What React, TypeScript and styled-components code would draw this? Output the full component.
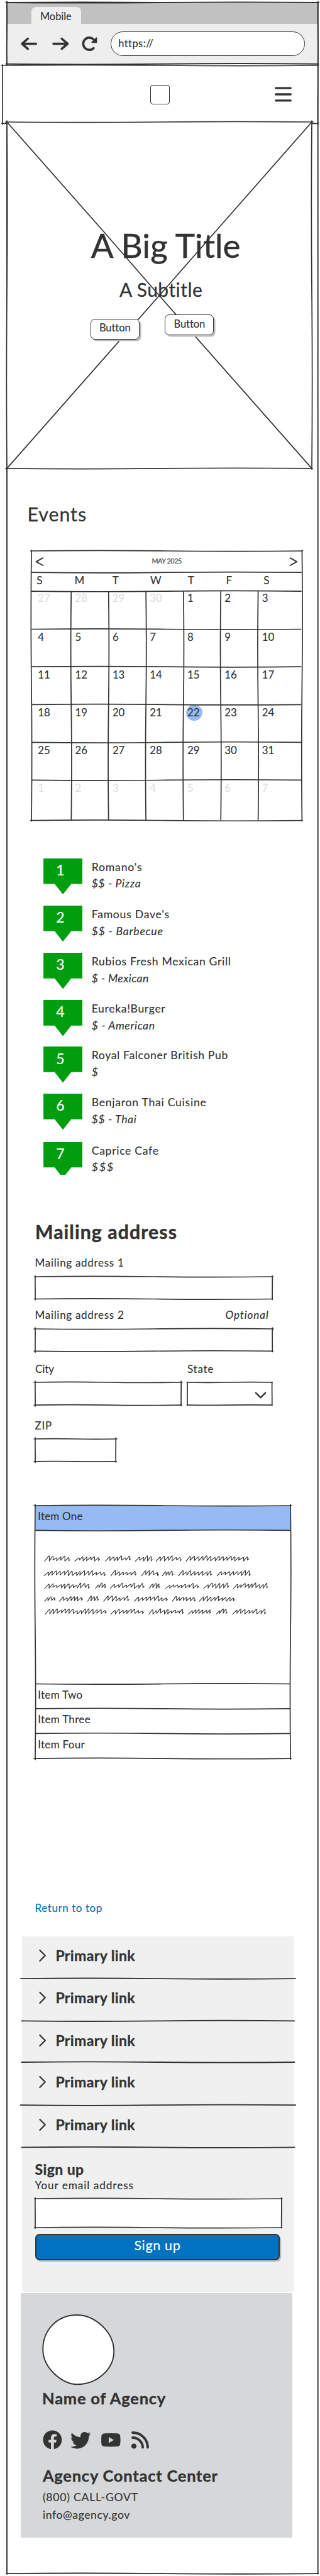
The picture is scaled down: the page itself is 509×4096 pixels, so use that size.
import React from 'react';
import styled, { createGlobalStyle, css } from 'styled-components';
import { FaFacebook, FaTwitter } from 'react-icons/fa';

const INK = '#333333';

const GlobalStyle = createGlobalStyle`
  html, body { margin: 0; padding: 0; background: #fff; }
  body { font-family: Lato, "Open Sans", sans-serif; color: ${INK}; }
  *, *::before, *::after { box-sizing: border-box; }
`;

/* ---------- hand-drawn outlines ---------- */

type Pt = [number, number, number, number];

const wobble = ([x1, y1, x2, y2]: Pt, seed: number) => {
  const dx = x2 - x1;
  const dy = y2 - y1;
  const len = Math.hypot(dx, dy) || 1;
  const amp = Math.min(1.1, len / 260) * (seed % 2 ? 1 : -1);
  const nx = (-dy / len) * amp;
  const ny = (dx / len) * amp;
  const at = (t: number, k: number) => `${(x1 + dx * t + nx * k).toFixed(2)} ${(y1 + dy * t + ny * k).toFixed(2)}`;
  return `M${at(0, 0)}C${at(0.2, 1)} ${at(0.35, 0.7)} ${at(0.5, 0)}S${at(0.8, -0.9)} ${at(1, 0)}`;
};

const Drawing = styled.svg`
  position: absolute;
  left: 0;
  top: 0;
  overflow: visible;
  pointer-events: none;
  fill: none;
  stroke: ${INK};
  stroke-linecap: round;
  stroke-linejoin: round;
`;

interface SketchProps {
  w: number;
  h: number;
  over?: number;
  stroke?: number;
  seed?: number;
  lines?: Pt[];
}

const Sketch = ({ w, h, over = 1.2, stroke = 1.7, seed = 0, lines = [] }: SketchProps) => {
  const sides: Pt[] = [
    [-over, 0, w + over, 0],
    [w, -over, w, h + over * 0.6],
    [-over, h, w + over * 0.6, h],
    [0, -over, 0, h + over],
  ];
  return (
    <Drawing width={w} height={h} strokeWidth={stroke} aria-hidden>
      {[...sides, ...lines].map((s, i) => (
        <path key={i} d={wobble(s, i + seed + (i % 3))} />
      ))}
    </Drawing>
  );
};

/* ---------- text ---------- */

interface TextProps {
  $size: number;
  $ls?: number;
  $bold?: boolean;
  $italic?: boolean;
  $color?: string;
  $top?: number;
  $left?: number;
  $right?: number;
}

const Text = styled.div<TextProps>`
  font-size: ${(p) => p.$size}px;
  line-height: ${(p) => p.$size * 1.2}px;
  height: ${(p) => p.$size * 1.2}px;
  letter-spacing: ${(p) => p.$ls ?? 0}px;
  font-weight: ${(p) => (p.$bold ? 700 : 400)};
  font-style: ${(p) => (p.$italic ? 'italic' : 'normal')};
  color: ${(p) => p.$color ?? INK};
  -webkit-text-stroke: ${(p) => (p.$bold ? 0.016 : 0.009)}em ${(p) => p.$color ?? INK};
  margin: ${(p) => p.$top ?? 0}px ${(p) => p.$right ?? 0}px 0 ${(p) => p.$left ?? 0}px;
  white-space: nowrap;
`;

const Heading = styled(Text).attrs({ as: 'h2' })``;

const Title = styled(Text).attrs({ as: 'h1' })``;

/* ---------- page ---------- */

const Page = styled.div`
  position: relative;
  width: 509px;
  height: 4096px;
  padding-top: 3.8px;
  background: #fff;
  overflow: hidden;
  display: flex;
  flex-direction: column;
  align-items: flex-start;
`;

const PageEdge = styled.div`
  position: absolute;
  left: 10.7px;
  top: 3.8px;
`;

/* ---------- browser chrome ---------- */

const Chrome = styled.div`
  position: relative;
  width: 494.7px;
  height: 97.7px;
  margin-left: 10.7px;
  flex: none;
`;

const TabStrip = styled.div`
  display: flex;
  align-items: flex-end;
  height: 33.9px;
  padding-left: 39.6px;
  background: #c1c1c1;
`;

const Tab = styled.div`
  width: 78.6px;
  height: 27.1px;
  padding: 5.9px 0 0 13.6px;
  border-radius: 7px 7px 0 0;
  background: #eee;
`;

const Toolbar = styled.div`
  display: flex;
  align-items: center;
  height: 63.8px;
  padding-left: 22.4px;
  background: #eee;
`;

const ToolIcon = styled.svg<{ $gap: number }>`
  display: block;
  flex: none;
  overflow: visible;
  fill: none;
  stroke: ${INK};
  stroke-width: 3.6;
  stroke-linecap: round;
  stroke-linejoin: round;
  margin-right: ${(p) => p.$gap}px;
`;

const AddressBar = styled.div`
  width: 309.6px;
  height: 39.6px;
  padding: 8px 0 0 11.4px;
  border: 1.9px solid ${INK};
  border-radius: 20px;
  background: #fff;
`;

/* ---------- site header ---------- */

const SiteHeader = styled.header`
  position: relative;
  display: flex;
  align-items: center;
  width: 501.5px;
  height: 92.4px;
  margin: 2.5px 0 0 3.9px;
  padding-left: 235px;
  flex: none;
  background: #fff;
`;

const LogoBox = styled.div`
  width: 31.6px;
  height: 31.2px;
  border: 1.2px solid ${INK};
  border-radius: 4px;
`;

const MenuIcon = styled.svg`
  margin-left: 167px;
  stroke: ${INK};
  stroke-width: 3.3;
  stroke-linecap: round;
  overflow: visible;
`;

/* ---------- hero ---------- */

const Hero = styled.section`
  position: relative;
  width: 485px;
  height: 550.9px;
  margin: -2.1px 0 0 10.7px;
  padding-top: 163.9px;
  flex: none;
  background: #fff;
`;

const HeroButtons = styled.div`
  position: relative;
  display: flex;
  gap: 40.6px;
  margin: 22.2px 0 0 133.1px;
`;

const HeroButton = styled.button<{ $drop?: number }>`
  width: 78px;
  height: 33.2px;
  margin: ${(p) => p.$drop ?? 0}px 0 0;
  padding: 4.6px 0 0;
  display: flex;
  justify-content: center;
  align-items: flex-start;
  font-family: inherit;
  border: 1.7px solid ${INK};
  border-radius: 7px;
  background: #fff;
  box-shadow: 2.6px 2.6px 0 #bfbfbf;
`;

/* ---------- calendar ---------- */

const COLS = [63.3, 59.4, 59.4, 59.7, 59.4, 59.4, 69.8];
const ROWS = [60.4, 59.7, 60.1, 60.1, 60, 64.1];

const Calendar = styled.section`
  position: relative;
  width: 430.4px;
  height: 428.6px;
  margin: 40px 0 0 50px;
  flex: none;
`;

const MonthBar = styled.div`
  display: flex;
  align-items: center;
  justify-content: space-between;
  height: 34.2px;
  padding: 0 7.4px;
`;

const MonthArrow = styled.svg`
  width: 11.6px;
  height: 12.2px;
  overflow: visible;
  fill: none;
  stroke: ${INK};
  stroke-width: 1.9;
  stroke-linecap: round;
  stroke-linejoin: round;
`;

const WeekRow = styled.div`
  display: grid;
  grid-template-columns: ${COLS.map((c) => `${c}px`).join(' ')};
  height: 29.9px;
  padding-top: 2.8px;
`;

const DayGrid = styled.div`
  display: grid;
  grid-template-columns: ${COLS.map((c) => `${c}px`).join(' ')};
  grid-template-rows: ${ROWS.map((r) => `${r}px`).join(' ')};
`;

const Day = styled.div<{ $first: boolean; $topRow: boolean; $today: boolean }>`
  position: relative;
  padding-top: ${(p) => (p.$topRow ? 0.7 : 2.6)}px;
  padding-left: ${(p) => (p.$first ? 10.2 : 6.2)}px;
  ${(p) =>
    p.$today &&
    css`
      &::before {
        content: '';
        position: absolute;
        left: 4.6px;
        top: 0.8px;
        width: 25.6px;
        height: 25.2px;
        border-radius: 46% 54% 50% 50% / 52% 44% 56% 48%;
        background: #95bbf2;
      }
    `}
  & > div { position: relative; }
`;

/* ---------- places ---------- */

const Places = styled.ol`
  list-style: none;
  margin: 60.2px 0 0 69.1px;
  padding: 0;
  flex: none;
`;

const Place = styled.li<{ $h: number }>`
  display: flex;
  height: ${(p) => p.$h}px;
  overflow: hidden;
`;

const Marker = styled.div`
  width: 62px;
  height: 57.5px;
  flex: none;
  padding: 5.5px 0 0 20.2px;
  background: #009e0f;
  clip-path: polygon(0 0, 62px 0, 62px 40.8px, 44.3px 40.8px, 31px 57.5px, 17.8px 40.8px, 0 40.8px);
`;

const PlaceText = styled.div`
  padding: 3px 0 0 14.6px;
`;

/* ---------- form ---------- */

const Form = styled.form`
  width: 377.2px;
  margin: 72.5px 0 0 55.5px;
  flex: none;
`;

const LabelRow = styled.div<{ $top: number }>`
  display: flex;
  justify-content: space-between;
  margin-top: ${(p) => p.$top}px;
`;

const Field = styled.div<{ $w: number; $h: number; $top: number }>`
  position: relative;
  width: ${(p) => p.$w}px;
  height: ${(p) => p.$h}px;
  margin-top: ${(p) => p.$top}px;
  background: #fff;
`;

const Pair = styled.div`
  display: flex;
  gap: 10.4px;
  margin-top: 18.7px;
`;

const SelectArrow = styled.svg`
  position: absolute;
  right: 9.8px;
  top: 16px;
  overflow: visible;
  fill: none;
  stroke: ${INK};
  stroke-width: 2.3;
  stroke-linecap: round;
  stroke-linejoin: round;
`;

/* ---------- accordion ---------- */

const Accordion = styled.section`
  position: relative;
  width: 406.1px;
  height: 402.1px;
  margin: 69.8px 0 0 55.5px;
  flex: none;
`;

const AccordionHead = styled.div<{ $h: number; $open?: boolean }>`
  height: ${(p) => p.$h}px;
  padding: 7.8px 0 0 4.7px;
  background: ${(p) => (p.$open ? '#95bbf2' : 'transparent')};
`;

const AccordionBody = styled.div`
  position: relative;
  height: 244.1px;
`;

/* ---------- footer ---------- */

const LinkPanel = styled.nav`
  width: 432.4px;
  height: 565.7px;
  margin: 34.7px 0 0 35px;
  flex: none;
  background: #f0f0f0;
`;

const LinkRow = styled.div<{ $h: number }>`
  position: relative;
  display: flex;
  align-items: flex-start;
  height: ${(p) => p.$h}px;
  padding: 17.7px 0 0 28px;
`;

const LinkArrow = styled.svg`
  width: 9px;
  height: 17px;
  margin: 5px 16.4px 0 0;
  overflow: visible;
  fill: none;
  stroke: ${INK};
  stroke-width: 2.2;
  stroke-linecap: round;
  stroke-linejoin: round;
`;

const SignUp = styled.div`
  padding: 21.1px 0 0 20.5px;
`;

const SignUpButton = styled.button`
  display: flex;
  justify-content: center;
  align-items: flex-start;
  width: 388.6px;
  height: 42.2px;
  margin: 9.5px 0 0 0.6px;
  padding: 4.4px 0 0;
  font-family: inherit;
  border: 2px solid ${INK};
  border-radius: 7px;
  background: #0072c0;
  box-shadow: 2.2px 2.4px 0 #bfbfbf;
`;

const Agency = styled.footer`
  width: 432.3px;
  height: 389px;
  margin: 1.3px 0 0 32.5px;
  padding: 35.8px 0 0 35.4px;
  flex: none;
  background: #d6d7d9;
`;

const Seal = styled.svg`
  display: block;
  overflow: visible;
  fill: #fff;
  stroke: ${INK};
  stroke-width: 1.9;
`;

const Social = styled.div`
  display: flex;
  align-items: center;
  height: 31px;
  margin-top: 35.5px;
  color: ${INK};
`;

const SocialIcon = styled.span<{ $w: number; $gap: number }>`
  display: flex;
  width: ${(p) => p.$w}px;
  margin-right: ${(p) => p.$gap}px;
  svg { display: block; overflow: visible; }
`;

/* ---------- data ---------- */

const WEEKDAYS: [string, number][] = [
  ['S', 8.2], ['M', 5.3], ['T', 6], ['W', 6.8], ['T', 7], ['F', 8.4], ['S', 8.8],
];

const DAYS = [27, 28, 29, 30, ...Array.from({ length: 31 }, (_, i) => i + 1), 1, 2, 3, 4, 5, 6, 7];

const PLACES: [string, string, number, number, number][] = [
  ["Romano's", '$$ - Pizza', 75.2, 0.83, 0.62],
  ["Famous Dave's", '$$ - Barbecue', 75.2, 0.75, 0.79],
  ['Rubios Fresh Mexican Grill', '$ - Mexican', 74.9, 0.67, 0.42],
  ['Eureka!Burger', '$ - American', 74.2, 0.65, 0.6],
  ['Royal Falconer British Pub', '$', 74.8, 0.65, 0.7],
  ['Benjaron Thai Cuisine', '$$ - Thai', 76.7, 0.74, 0.62],
  ['Caprice Cafe', '$$$', 52.1, 0.7, 2],
];

const LINK_HEIGHTS = [67.1, 67.4, 66, 68.3, 67.4];

const SCRIBBLE_LINES: { y: number; words: [number, number][] }[] = [
  { y: 49.3, words: [[15, 55], [63, 102.5], [111.7, 151.3], [159.3, 186.3], [192.2, 232.4], [240, 339.2]] },
  { y: 72.6, words: [[14, 111.7], [120.4, 160.4], [169.4, 195.7], [202.2, 218.8], [227.9, 280.8], [289.5, 342.8]] },
  { y: 92.6, words: [[15, 86.7], [96, 112.3], [119.2, 172.7], [181.2, 198.3], [207.2, 259.4], [268, 307.4], [315.5, 370]] },
  { y: 113.2, words: [[15.2, 32.2], [38.6, 75.3], [83.5, 100.6], [109, 149.3], [157.8, 210], [218, 253.8], [261.2, 316.8]] },
  { y: 133.6, words: [[16, 112.6], [120.4, 172.7], [180.8, 236], [243.6, 279.2], [288.2, 305.2], [314, 367]] },
];

const scribble = (x0: number, x1: number, y: number, seed: number) => {
  const humps = Math.max(2, Math.round((x1 - x0) / 6.4));
  const p = (x1 - x0) / (humps + 0.35);
  const rnd = (i: number) => {
    const v = Math.sin(seed * 12.9898 + i * 78.233) * 43758.5453;
    return v - Math.floor(v);
  };
  let d = `M${x0.toFixed(1)} ${y.toFixed(1)}`;
  for (let i = 0; i < humps; i++) {
    const h = 5 + rnd(i) * 3.6;
    const px = x0 + p * (i + 1) + rnd(i + 31) * 0.9;
    const by = y - rnd(i + 7) * 1.8;
    const bx = px - 0.6 + rnd(i + 13) * 1.3;
    d += `L${(px - 0.8).toFixed(1)} ${(y - h + 0.3).toFixed(1)}`;
    d += `Q${(px + 0.5).toFixed(1)} ${(y - h - 0.5).toFixed(1)} ${(px + 0.3).toFixed(1)} ${(y - h + 1).toFixed(1)}`;
    d += `L${bx.toFixed(1)} ${by.toFixed(1)}`;
  }
  return `${d}l${(p * 0.3).toFixed(1)} -2`;
};

const cumulative = (start: number, sizes: number[]) => {
  let acc = start;
  return sizes.slice(0, -1).map((s) => (acc += s));
};

const calendarLines: Pt[] = [
  [0, 34.2, 429, 34.2],
  [0, 64.1, 429, 64.1],
  ...cumulative(64.1, ROWS).map((y): Pt => [1, y, 428.6, y]),
  ...cumulative(0, COLS).map((x): Pt => [x, 64.5, x, 427.4]),
];

const accordionLines: Pt[] = [39.4, 283.5, 322.9, 362.4].map((y): Pt => [0.5, y, 404.6, y]);

/* ---------- app ---------- */

export default function App() {
  return (
    <>
      <GlobalStyle />
      <Page>
        <PageEdge>
          <Sketch w={494.7} h={4088.1} over={1} stroke={1.9} />
        </PageEdge>

        <Chrome>
          <TabStrip>
            <Tab>
              <Text $size={16.4}>Mobile</Text>
            </Tab>
          </TabStrip>
          <Toolbar>
            <ToolIcon $gap={24} width={26.2} height={29.2} viewBox="0 0 26.2 29.2">
              <path d="M24.4 14.6H2.2M11.2 6.5L2 14.6L11.2 22.7" />
            </ToolIcon>
            <ToolIcon $gap={20.6} width={26.6} height={29.2} viewBox="0 0 26.6 29.2">
              <path d="M2 14.6H24.2M15.2 6.5L24.6 14.6L15.2 22.7" />
            </ToolIcon>
            <ToolIcon $gap={20.8} width={24.6} height={23} viewBox="0 0 24.6 23">
              <path d="M18.8 18.6A9.7 9.7 0 1 1 18.4 4.2" />
              <path d="M23.4 2.4V9.3H16.4Z" strokeWidth={2} fill={INK} />
            </ToolIcon>
            <AddressBar>
              <Text $size={16.4} $ls={0.47}>https://</Text>
            </AddressBar>
          </Toolbar>
          <Sketch w={494.7} h={97.7} over={1.6} stroke={1.9} seed={1} />
        </Chrome>

        <SiteHeader>
          <LogoBox />
          <MenuIcon width={27} height={24} viewBox="0 0 27 24">
            <path d="M1.7 2.1H25.3M1.7 12H25.3M1.7 21.9H25.3" />
          </MenuIcon>
          <Sketch w={501.5} h={92.4} />
        </SiteHeader>

        <Hero>
          <Sketch w={485} h={550.9} over={2} seed={1} />
          <Drawing width={485} height={550.9} strokeWidth={1.7}>
            <path d="M0 0L155 175.5L242.3 276L485 550.9M485 0L330.5 175.5L242.3 276L0 550.9" />
          </Drawing>
          <Title $size={53} $ls={0.09} $left={134}>A Big Title</Title>
          <Text $size={30} $ls={0.45} $top={20.1} $left={179.2}>A Subtitle</Text>
          <HeroButtons>
            <HeroButton $drop={6.5}>
              <Text as="span" $size={16.6} $ls={-0.1}>Button</Text>
            </HeroButton>
            <HeroButton>
              <Text as="span" $size={16.6} $ls={-0.1}>Button</Text>
            </HeroButton>
          </HeroButtons>
        </Hero>

        <Heading $size={30.4} $ls={0.9} $top={54.2} $left={43.6}>Events</Heading>

        <Calendar>
          <MonthBar>
            <MonthArrow viewBox="0 0 11.6 12.2">
              <path d="M11.2 0.2L0.6 6.1L11.2 12" />
            </MonthArrow>
            <Text $size={10.8} $ls={-0.4}>MAY 2025</Text>
            <MonthArrow viewBox="0 0 11.6 12.2">
              <path d="M0.6 0.2L11.2 6.1L0.6 12" />
            </MonthArrow>
          </MonthBar>
          <WeekRow>
            {WEEKDAYS.map(([label, left], i) => (
              <Text key={i} $size={17} $left={left}>{label}</Text>
            ))}
          </WeekRow>
          <DayGrid>
            {DAYS.map((day, i) => (
              <Day key={i} $first={i % 7 === 0} $topRow={i < 7} $today={i === 25}>
                <Text $size={16.8} $color={i < 4 || i > 34 ? '#dedede' : INK}>{day}</Text>
              </Day>
            ))}
          </DayGrid>
          <Sketch w={430.4} h={428.6} lines={calendarLines} />
        </Calendar>

        <Places>
          {PLACES.map(([name, detail, h, ls, ls2], i) => (
            <Place key={name} $h={h}>
              <Marker>
                <Text $size={23} $color="#fff">{i + 1}</Text>
              </Marker>
              <PlaceText>
                <Text $size={17.6} $ls={ls}>{name}</Text>
                <Text $size={17.6} $ls={ls2} $italic $top={5.7}>{detail}</Text>
              </PlaceText>
            </Place>
          ))}
        </Places>

        <Form>
          <Heading $size={30.2} $ls={1.1} $bold $left={0.4}>Mailing address</Heading>
          <LabelRow $top={21.7}>
            <Text as="label" $size={17} $ls={0.7}>Mailing address 1</Text>
          </LabelRow>
          <Field $w={377.2} $h={35.5} $top={11.4}>
            <Sketch w={377.2} h={35.5} />
          </Field>
          <LabelRow $top={15.8}>
            <Text as="label" $size={17} $ls={0.7}>Mailing address 2</Text>
            <Text $size={17} $ls={0.93} $italic $right={5}>Optional</Text>
          </LabelRow>
          <Field $w={377.2} $h={35.4} $top={11.4}>
            <Sketch w={377.2} h={35.4} over={1.8} seed={1} />
          </Field>
          <Pair>
            <div>
              <Text $size={17} $ls={-0.1} $left={0.6}>City</Text>
              <Field $w={232.1} $h={36.1} $top={10.7}>
                <Sketch w={232.1} h={36.1} over={1.8} />
              </Field>
            </div>
            <div>
              <Text $size={17} $ls={0.74}>State</Text>
              <Field $w={134.7} $h={36.1} $top={10.7}>
                <Sketch w={134.7} h={36.1} over={0.5} seed={1} />
                <SelectArrow width={17} height={9} viewBox="0 0 17 9">
                  <path d="M0.8 0.6L8.5 8.4L16.2 0.6" />
                </SelectArrow>
              </Field>
            </div>
          </Pair>
          <Text $size={17} $ls={0.8} $top={22.4}>ZIP</Text>
          <Field $w={128.2} $h={35.8} $top={11.1}>
            <Sketch w={128.2} h={35.8} over={1.8} />
          </Field>
        </Form>

        <Accordion>
          <AccordionHead $h={39.4} $open>
            <Text $size={17} $ls={0.2}>Item One</Text>
          </AccordionHead>
          <AccordionBody>
            <Drawing width={406} height={244} strokeWidth={1.1}>
              {SCRIBBLE_LINES.map((line, l) =>
                line.words.map(([a, b], k) => <path key={`${l}-${k}`} d={scribble(a, b, line.y, l * 11 + k + 1)} />),
              )}
            </Drawing>
          </AccordionBody>
          <AccordionHead $h={39.4}>
            <Text $size={17} $ls={0.3}>Item Two</Text>
          </AccordionHead>
          <AccordionHead $h={39.5}>
            <Text $size={17} $ls={0.32}>Item Three</Text>
          </AccordionHead>
          <AccordionHead $h={39.7}>
            <Text $size={17} $ls={0.3}>Item Four</Text>
          </AccordionHead>
          <Sketch w={406.1} h={402.1} over={2} lines={accordionLines} />
        </Accordion>

        <Text as="a" $size={17} $ls={0.57} $top={227.9} $left={55.6} $color="#0072c0">Return to top</Text>

        <LinkPanel>
          {LINK_HEIGHTS.map((h, i) => (
            <LinkRow key={i} $h={h}>
              <LinkArrow viewBox="0 0 9 17">
                <path d="M0.4 0L8.8 8.5L0.4 17" />
              </LinkArrow>
              <Text $size={23} $ls={0.39} $bold>Primary link</Text>
              <Drawing width={432.4} height={h} strokeWidth={1.9}>
                <path d={wobble(i % 3 === 0 ? [-2.4, h, 435.2, h] : [-0.6, h, 433.4, h], i)} />
              </Drawing>
            </LinkRow>
          ))}
          <SignUp>
            <Heading $size={23} $ls={0.41} $bold>Sign up</Heading>
            <Text $size={17.3} $ls={0.9} $top={1.7}>Your email address</Text>
            <Field $w={391.8} $h={46} $top={10}>
              <Sketch w={391.8} h={46} />
            </Field>
            <SignUpButton>
              <Text as="span" $size={21.5} $ls={0.65} $color="#fff">Sign up</Text>
            </SignUpButton>
          </SignUp>
        </LinkPanel>

        <Agency>
          <Seal width={113.4} height={110.3} viewBox="0 0 113.4 110.3">
            <path d="M52 0C82 -1 112.6 26 113.2 57C113.6 88 84 110.3 55 110.3C30 110 1 84 0.3 56C-0.5 24 23 1 52 0Z" />
          </Seal>
          <Heading $size={25.5} $ls={0.75} $bold $top={6.5} $left={-0.8}>Name of Agency</Heading>
          <Social>
            <SocialIcon $w={30.8} $gap={13.6}>
              <FaFacebook size={30.8} />
            </SocialIcon>
            <SocialIcon $w={33} $gap={16.2}>
              <FaTwitter size={32.6} />
            </SocialIcon>
            <SocialIcon $w={30.6} $gap={17}>
              <svg width={30.6} height={21.4} viewBox="0 0 30.6 21.4">
                <path
                  fill={INK}
                  fillRule="evenodd"
                  d="M5 0.3Q15.3 -0.4 25.6 0.3Q30 0.7 30.3 5Q30.8 10.7 30.3 16.4Q30 20.7 25.6 21.1Q15.3 21.8 5 21.1Q0.6 20.7 0.3 16.4Q-0.2 10.7 0.3 5Q0.6 0.7 5 0.3ZM12 6V15.4L20 10.7Z"
                />
              </svg>
            </SocialIcon>
            <SocialIcon $w={28} $gap={0}>
              <svg width={28} height={27.6} viewBox="0 0 28 27.6" fill="none" stroke={INK} strokeWidth={3.9} strokeLinecap="round">
                <path d="M2 2A24 23.6 0 0 1 26 25.6M2 10A16 15.6 0 0 1 18 25.6" />
                <circle cx={4} cy={23.6} r={4} fill={INK} stroke="none" />
              </svg>
            </SocialIcon>
          </Social>
          <Heading $size={25.5} $ls={0.76} $bold $top={25.4}>Agency Contact Center</Heading>
          <Text $size={17.6} $ls={0.77} $top={8.6}>(800) CALL-GOVT</Text>
          <Text $size={17.6} $ls={0.59} $top={7.3}>info@agency.gov</Text>
        </Agency>
      </Page>
    </>
  );
}
